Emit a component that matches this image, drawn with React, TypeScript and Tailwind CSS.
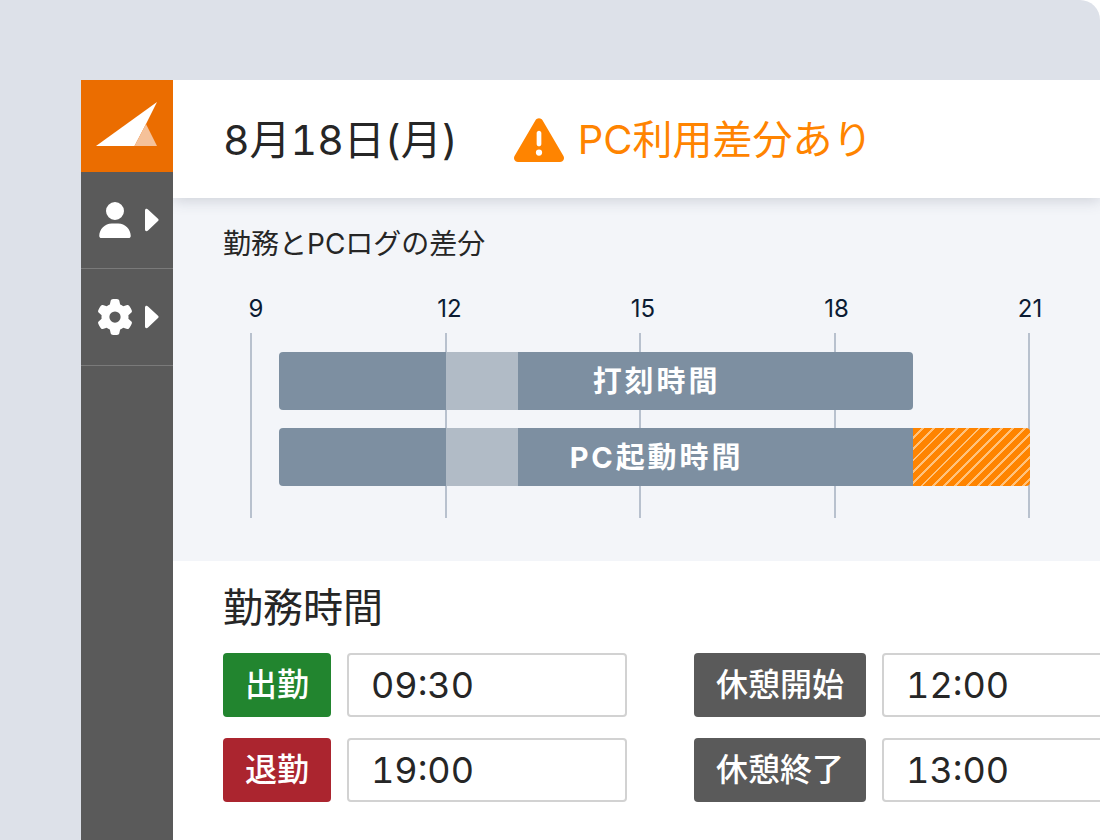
import type { ReactNode } from "react";
import { FaGear, FaTriangleExclamation, FaUser } from "react-icons/fa6";
import clsx from "clsx";

const hours = [9, 12, 15, 18, 21];

type Segment = {
  kind: "work" | "break" | "diff";
  // share of the track, which runs from clock-in to the end of the axis
  width: number;
};

const logs: { label: string; segments: Segment[] }[] = [
  {
    label: "打刻時間",
    segments: [
      { kind: "work", width: 22.2 },
      { kind: "break", width: 9.6 },
      { kind: "work", width: 52.6 },
    ],
  },
  {
    label: "PC起動時間",
    segments: [
      { kind: "work", width: 22.2 },
      { kind: "break", width: 9.6 },
      { kind: "work", width: 52.6 },
      { kind: "diff", width: 15.6 },
    ],
  },
];

const segmentClass = {
  work: "bg-[#7d8fa1]",
  break: "bg-[#b1bbc6]",
  diff: "bg-[repeating-linear-gradient(135deg,#ff8400_0px,#ff8400_6px,#ffc27c_6px,#ffc27c_8px)]",
};

const timeColumns = [
  [
    { id: "clock-in", label: "出勤", value: "09:30", color: "bg-[#22852f]" },
    { id: "clock-out", label: "退勤", value: "19:00", color: "bg-[#ab252f]" },
  ],
  [
    { id: "break-start", label: "休憩開始", value: "12:00", color: "bg-[#5a5a5a]" },
    { id: "break-end", label: "休憩終了", value: "13:00", color: "bg-[#5a5a5a]" },
  ],
];

export default function App() {
  return (
    <div className="min-h-screen bg-white font-['Inter','Noto_Sans_CJK_JP',sans-serif] text-[#262626]">
      <div className="min-h-screen flex overflow-hidden rounded-tr-[20px] bg-[#dde1e9] pl-[81px] pt-20">
        <Sidebar />
        <main className="flex-1 min-w-0 overflow-hidden bg-white">
          <Header />
          <DiffSection />
          <TimeSection />
        </main>
      </div>
    </div>
  );
}

function Sidebar() {
  return (
    <nav className="w-[92px] flex-shrink-0 flex flex-col bg-[#5a5a5a]">
      <a href="#" aria-label="ホーム" className="block h-[92px] bg-[#eb6d00]">
        <svg viewBox="0 0 92 92" className="w-full h-full">
          <path d="M76 22 L15 66 H53.500 L65 44 Z" fill="#fff" />
          <path d="M65 44 L76 66 H53.500 Z" fill="#f5c199" />
        </svg>
      </a>
      <SidebarItem label="ユーザー">
        <FaUser size={36} />
      </SidebarItem>
      <SidebarItem label="設定">
        <FaGear size={36} />
      </SidebarItem>
    </nav>
  );
}

function SidebarItem({ label, children }: { label: string; children: ReactNode }) {
  return (
    <button
      type="button"
      aria-label={label}
      className="h-[97px] flex items-center pl-4 gap-3 border-b border-[#7a7a7a] text-white"
    >
      <span className="w-9 flex justify-center">{children}</span>
      <svg viewBox="0 0 14 24" className="w-[14px] h-6" fill="currentColor">
        <path d="M0 2.500 C0 .8 1.800 .2 3 1.500 L13 10.700 C13.800 11.500 13.800 12.300 13 13.100 L3 22.500 C1.800 23.700 0 23.200 0 21.500 Z" />
      </svg>
    </button>
  );
}

function Header() {
  return (
    <header className="relative h-[118px] flex items-center pl-[50px] pt-[2px] gap-14 bg-white leading-none shadow-[0_2px_14px_rgba(60,70,90,0.22)]">
      <h1 className="text-[41px] tabular-nums whitespace-nowrap">8月18日(月)</h1>
      <p className="flex items-center gap-[14px] text-[40px] whitespace-nowrap text-[#ff8400]">
        <FaTriangleExclamation size={50} />
        PC利用差分あり
      </p>
    </header>
  );
}

function DiffSection() {
  return (
    <section className="bg-[#f3f5f9] pl-[50px] pr-[54px] pt-7 pb-[43px]">
      <h2 className="text-[28px] leading-9">勤務とPCログの差分</h2>

      {/* Hour labels */}
      <div className="flex justify-between mt-[31px] pl-[17px] text-2xl leading-8 text-[#0b1b33]">
        {hours.map((hour) => (
          <span key={hour} className="w-8 text-center">
            {hour}
          </span>
        ))}
      </div>

      {/* Grid lines and bars share one cell */}
      <div className="grid mt-2 ml-[27px] mr-4">
        <div className="col-start-1 row-start-1 flex justify-between">
          {hours.map((hour) => (
            <span key={hour} className="w-[2px] bg-[#b8c1ce]" />
          ))}
        </div>
        <div className="col-start-1 row-start-1 z-10 flex flex-col gap-[18px] pl-[29px] pt-[19px] pb-8">
          {logs.map((log) => (
            <LogBar key={log.label} label={log.label} segments={log.segments} />
          ))}
        </div>
      </div>
    </section>
  );
}

function LogBar({ label, segments }: { label: string; segments: Segment[] }) {
  return (
    <div className="grid h-[58px]">
      <div className="col-start-1 row-start-1 flex">
        {segments.map((segment, i) => (
          <div
            key={i}
            style={{ width: `${segment.width}%` }}
            className={clsx(
              "first:rounded-l-[4px] last:rounded-r-[4px]",
              segmentClass[segment.kind]
            )}
          />
        ))}
      </div>
      <span className="col-start-1 row-start-1 place-self-center pl-1 text-[29px] leading-none font-bold tracking-widest text-white">
        {label}
      </span>
    </div>
  );
}

function TimeSection() {
  return (
    <section className="pl-[50px] pt-[27px] pb-10">
      <h2 className="text-[40px] leading-10">勤務時間</h2>
      <div className="flex gap-[67px] mt-[25px]">
        {timeColumns.map((fields) => (
          <div key={fields[0].id} className="flex-shrink-0 flex flex-col gap-[21px]">
            {fields.map((field) => (
              <div key={field.id} className="flex gap-4">
                <label
                  htmlFor={field.id}
                  className={clsx(
                    "h-16 flex items-center px-[22px] rounded-[4px] text-[32px] leading-none font-medium whitespace-nowrap text-white",
                    field.color
                  )}
                >
                  {field.label}
                </label>
                <input
                  id={field.id}
                  type="text"
                  defaultValue={field.value}
                  className="w-[280px] h-16 px-[22px] rounded-[4px] border-2 border-[#d2d2d2] bg-white text-[36px] leading-none tabular-nums"
                />
              </div>
            ))}
          </div>
        ))}
      </div>
    </section>
  );
}
